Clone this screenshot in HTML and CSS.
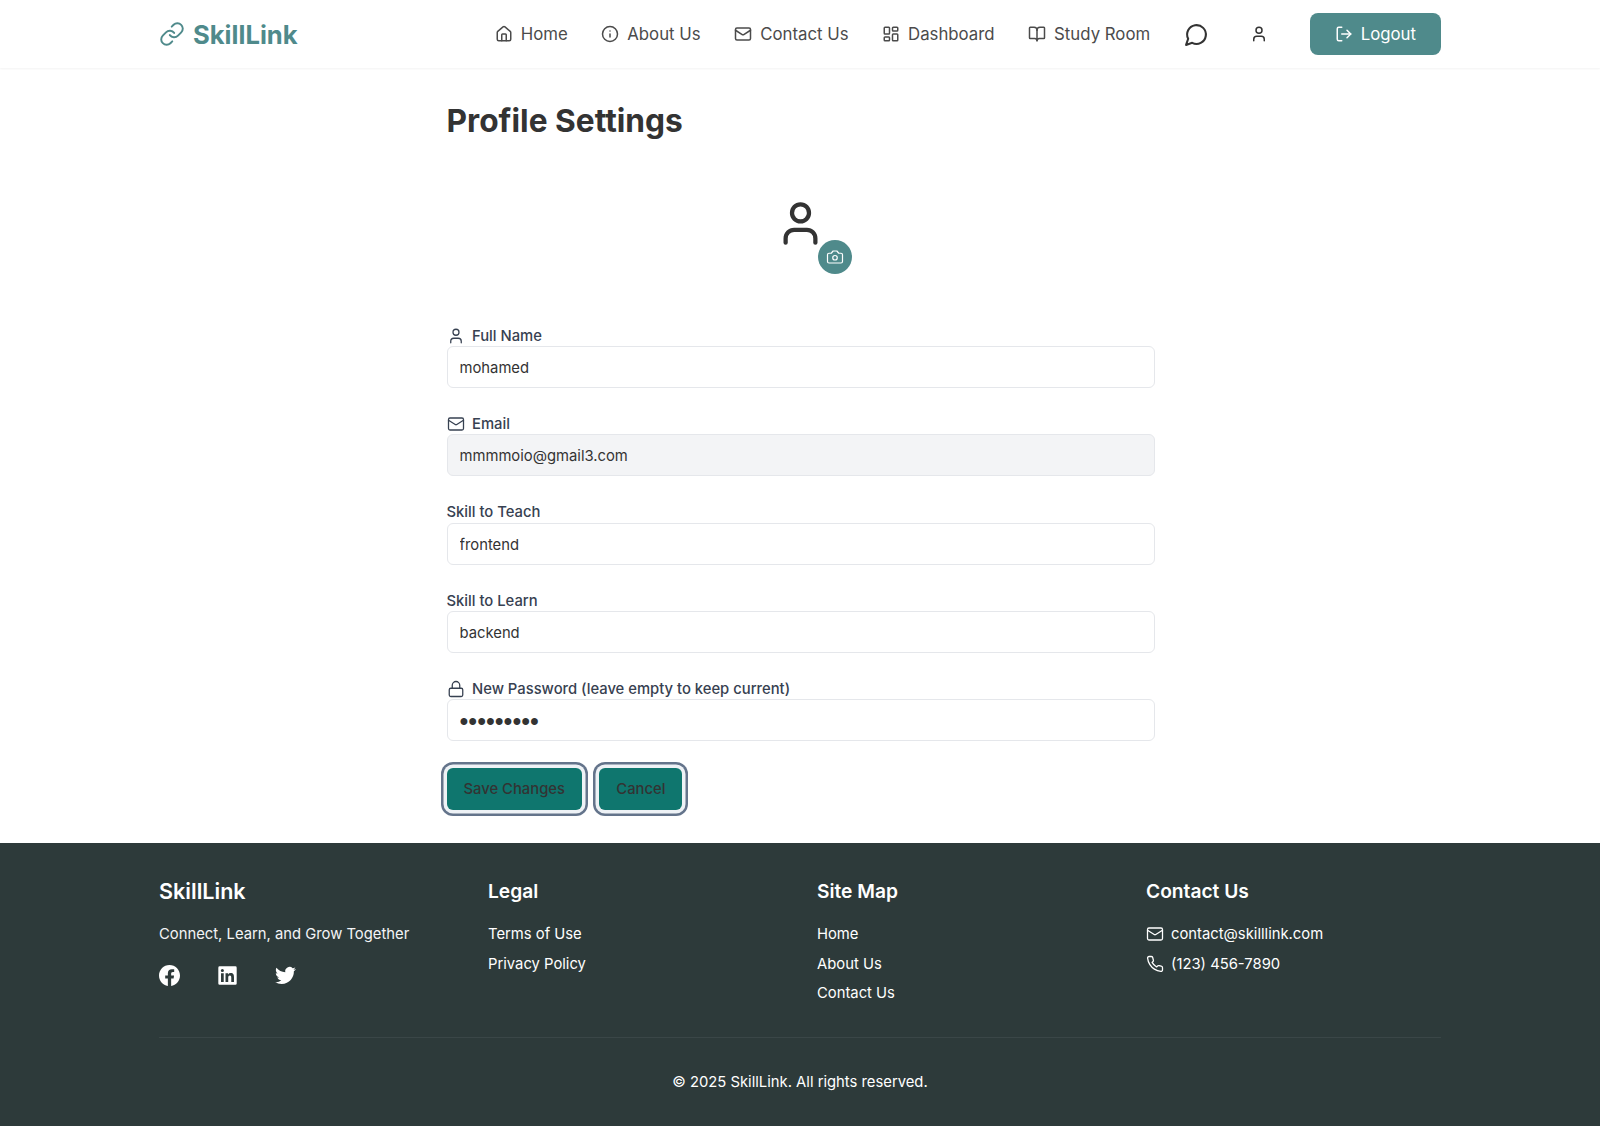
FILE: index.html
```html
<!DOCTYPE html>
<html lang="en">
<head>
<meta charset="utf-8">
<title>SkillLink - Profile Settings</title>
<link rel="stylesheet" href="styles.css">
</head>
<body>
<header class="site-header">
  <div class="header-inner">
    <a class="logo" href="#">
      <svg class="logo-icon" viewBox="0 0 24 24"><path d="M10 13a5 5 0 0 0 7.54.54l3-3a5 5 0 0 0-7.07-7.07l-1.72 1.71"/><path d="M14 11a5 5 0 0 0-7.54-.54l-3 3a5 5 0 0 0 7.07 7.07l1.71-1.71"/></svg>
      <span>SkillLink</span>
    </a>
    <nav class="nav">
      <a class="nav-link" href="#"><svg class="icon" viewBox="0 0 24 24"><path d="M15 21v-8a1 1 0 0 0-1-1h-4a1 1 0 0 0-1 1v8"/><path d="M3 10a2 2 0 0 1 .7-1.5l7-6a2 2 0 0 1 2.6 0l7 6A2 2 0 0 1 21 10v9a2 2 0 0 1-2 2H5a2 2 0 0 1-2-2z"/></svg>Home</a>
      <a class="nav-link" href="#"><svg class="icon" viewBox="0 0 24 24"><circle cx="12" cy="12" r="10"/><path d="M12 16v-4"/><path d="M12 8h.01"/></svg>About Us</a>
      <a class="nav-link" href="#"><svg class="icon" viewBox="0 0 24 24"><rect x="2" y="4" width="20" height="16" rx="2"/><path d="m22 7-8.97 5.7a1.94 1.94 0 0 1-2.06 0L2 7"/></svg>Contact Us</a>
      <a class="nav-link" href="#"><svg class="icon" viewBox="0 0 24 24"><rect x="3" y="3" width="7" height="9" rx="1"/><rect x="14" y="3" width="7" height="5" rx="1"/><rect x="14" y="12" width="7" height="9" rx="1"/><rect x="3" y="16" width="7" height="5" rx="1"/></svg>Dashboard</a>
      <a class="nav-link" href="#"><svg class="icon" viewBox="0 0 24 24"><path d="M12 7v14"/><path d="M3 18a1 1 0 0 1-1-1V4a1 1 0 0 1 1-1h5a4 4 0 0 1 4 4 4 4 0 0 1 4-4h5a1 1 0 0 1 1 1v13a1 1 0 0 1-1 1h-6a3 3 0 0 0-3 3 3 3 0 0 0-3-3z"/></svg>Study Room</a>
      <a class="nav-chat" href="#"><svg class="icon-chat" viewBox="0 0 24 24"><path d="M7.9 20A9 9 0 1 0 4 16.1L2 22Z"/></svg></a>
      <a class="nav-user" href="#"><svg class="icon" viewBox="0 0 24 24"><path d="M19 21v-2a4 4 0 0 0-4-4H9a4 4 0 0 0-4 4v2"/><circle cx="12" cy="7" r="4"/></svg></a>
      <a class="logout" href="#"><svg class="icon" viewBox="0 0 24 24"><path d="M9 21H5a2 2 0 0 1-2-2V5a2 2 0 0 1 2-2h4"/><path d="m16 17 5-5-5-5"/><path d="M21 12H9"/></svg>Logout</a>
    </nav>
  </div>
</header>

<main class="main">
  <h1 class="title">Profile Settings</h1>
  <div class="avatar-row">
    <div class="avatar">
      <svg class="avatar-icon" viewBox="0 0 24 24"><path d="M19 21v-2a4 4 0 0 0-4-4H9a4 4 0 0 0-4 4v2"/><circle cx="12" cy="7" r="4"/></svg>
      <span class="camera"><svg class="icon-camera" viewBox="0 0 24 24"><path d="M14.5 4h-5L7 7H4a2 2 0 0 0-2 2v9a2 2 0 0 0 2 2h16a2 2 0 0 0 2-2V9a2 2 0 0 0-2-2h-3z"/><circle cx="12" cy="13" r="3"/></svg></span>
    </div>
  </div>
  <form class="form">
    <div class="field">
      <label class="label"><svg class="icon-label" viewBox="0 0 24 24"><path d="M19 21v-2a4 4 0 0 0-4-4H9a4 4 0 0 0-4 4v2"/><circle cx="12" cy="7" r="4"/></svg>Full Name</label>
      <input class="input" type="text" value="mohamed">
    </div>
    <div class="field">
      <label class="label"><svg class="icon-label" viewBox="0 0 24 24"><rect x="2" y="4" width="20" height="16" rx="2"/><path d="m22 7-8.97 5.7a1.94 1.94 0 0 1-2.06 0L2 7"/></svg>Email</label>
      <input class="input input-disabled" type="email" value="mmmmoio@gmail3.com" disabled>
    </div>
    <div class="field">
      <label class="label">Skill to Teach</label>
      <input class="input" type="text" value="frontend">
    </div>
    <div class="field">
      <label class="label">Skill to Learn</label>
      <input class="input" type="text" value="backend">
    </div>
    <div class="field">
      <label class="label"><svg class="icon-label" viewBox="0 0 24 24"><rect x="3" y="11" width="18" height="11" rx="2"/><path d="M7 11V7a5 5 0 0 1 10 0v4"/></svg>New Password (leave empty to keep current)</label>
      <input class="input input-password" type="password" value="mohamed12">
    </div>
    <div class="actions">
      <button class="btn" type="button">Save Changes</button>
      <button class="btn" type="button">Cancel</button>
    </div>
  </form>
</main>

<footer class="footer">
  <div class="footer-inner">
    <div class="footer-grid">
      <div class="col">
        <h3 class="col-title col-brand">SkillLink</h3>
        <p class="col-text">Connect, Learn, and Grow Together</p>
        <div class="socials">
          <svg class="social" viewBox="0 0 24 24"><path d="M24 12.07C24 5.4 18.63 0 12 0S0 5.4 0 12.07c0 6.03 4.39 11.02 10.13 11.93v-8.44H7.08v-3.49h3.05V9.41c0-3.02 1.79-4.69 4.53-4.69 1.31 0 2.69.24 2.69.24v2.97h-1.51c-1.49 0-1.96.93-1.96 1.89v2.25h3.33l-.53 3.49h-2.8V24C19.61 23.09 24 18.1 24 12.07z"/></svg>
          <svg class="social" viewBox="0 0 24 24"><path d="M21 1.5H3A1.5 1.5 0 0 0 1.5 3v18A1.5 1.5 0 0 0 3 22.5h18a1.5 1.5 0 0 0 1.5-1.5V3A1.5 1.5 0 0 0 21 1.5zM7.7 19.4H4.6V9.4h3.1zM6.15 8.05a1.8 1.8 0 1 1 0-3.6 1.8 1.8 0 0 1 0 3.6zM19.4 19.4h-3.1v-4.85c0-1.16-.02-2.65-1.61-2.65-1.62 0-1.86 1.26-1.86 2.56v4.94h-3.1V9.4h2.97v1.37h.04a3.26 3.26 0 0 1 2.94-1.61c3.14 0 3.72 2.07 3.72 4.76z" fill-rule="evenodd"/></svg>
          <svg class="social" viewBox="0 0 24 24"><path d="M23.95 4.57a10 10 0 0 1-2.82.77 4.96 4.96 0 0 0 2.16-2.72c-.95.55-2 .96-3.13 1.19a4.92 4.92 0 0 0-8.38 4.48C7.69 8.1 4.07 6.13 1.64 3.16a4.82 4.82 0 0 0-.67 2.48c0 1.71.87 3.21 2.19 4.1a4.9 4.9 0 0 1-2.23-.62v.06a4.92 4.92 0 0 0 3.95 4.83 4.99 4.99 0 0 1-2.21.08 4.94 4.94 0 0 0 4.6 3.42A9.87 9.87 0 0 1 0 19.54a13.99 13.99 0 0 0 7.56 2.21c9.05 0 14-7.5 14-13.98 0-.21 0-.42-.02-.63a9.94 9.94 0 0 0 2.46-2.55z"/></svg>
        </div>
      </div>
      <div class="col">
        <h3 class="col-title">Legal</h3>
        <ul class="links">
          <li><a href="#">Terms of Use</a></li>
          <li><a href="#">Privacy Policy</a></li>
        </ul>
      </div>
      <div class="col">
        <h3 class="col-title">Site Map</h3>
        <ul class="links">
          <li><a href="#">Home</a></li>
          <li><a href="#">About Us</a></li>
          <li><a href="#">Contact Us</a></li>
        </ul>
      </div>
      <div class="col">
        <h3 class="col-title">Contact Us</h3>
        <ul class="links">
          <li class="contact"><svg class="icon-label" viewBox="0 0 24 24"><rect x="2" y="4" width="20" height="16" rx="2"/><path d="m22 7-8.97 5.7a1.94 1.94 0 0 1-2.06 0L2 7"/></svg>contact@skilllink.com</li>
          <li class="contact"><svg class="icon-label" viewBox="0 0 24 24"><path d="M22 16.92v3a2 2 0 0 1-2.18 2 19.79 19.79 0 0 1-8.63-3.07 19.5 19.5 0 0 1-6-6 19.79 19.79 0 0 1-3.07-8.67A2 2 0 0 1 4.11 2h3a2 2 0 0 1 2 1.72 12.84 12.84 0 0 0 .7 2.81 2 2 0 0 1-.45 2.11L8.09 9.91a16 16 0 0 0 6 6l1.27-1.27a2 2 0 0 1 2.11-.45 12.84 12.84 0 0 0 2.81.7A2 2 0 0 1 22 16.92z"/></svg>(123) 456-7890</li>
        </ul>
      </div>
    </div>
    <div class="copyright">© 2025 SkillLink. All rights reserved.</div>
  </div>
</footer>
</body>
</html>
```
FILE: styles.css
```css
* { box-sizing: border-box; }
html, body { margin: 0; padding: 0; }
body { font-family: Inter, "Liberation Sans", sans-serif; color: #333; background: #fff; }
a { color: inherit; text-decoration: none; }
svg { fill: none; stroke: currentColor; stroke-width: 2; stroke-linecap: round; stroke-linejoin: round; flex: none; }

.site-header { height: 68px; background: #fff; box-shadow: 0 1px 2px rgba(0,0,0,.05); position: relative; }
.header-inner { width: 1282px; height: 68px; margin: 0 auto; display: flex; align-items: center; justify-content: space-between; }
.logo { display: flex; align-items: center; gap: 8px; color: #4f8a8b; font-size: 25.6px; font-weight: 700; }
.logo-icon { width: 26px; height: 26px; stroke-width: 1.8; }
.nav { display: flex; align-items: center; gap: 33.5px; font-size: 16.8px; color: #4b4b4b; }
.nav-link { display: flex; align-items: center; gap: 8px; }
.icon { width: 18px; height: 18px; }
.icon-chat { width: 25px; height: 25px; color: #333; display: block; }
.nav-user { color: #333; padding: 0 8px; display: flex; }
.nav-chat { display: flex; }
.logout { display: flex; align-items: center; gap: 8px; height: 42px; padding: 0 25px; background: #4f8a8b; color: #fff; border-radius: 8px; }

.main { width: 709px; margin: 0 auto; height: 775px; padding: 34px 0 0 1px; }
.title { margin: 0; font-size: 31.7px; line-height: 38px; font-weight: 700; color: #333; }
.avatar-row { display: flex; justify-content: center; margin-top: 58px; }
.avatar { width: 51px; height: 51px; position: relative; color: #333; }
.avatar-icon { width: 51px; height: 51px; display: block; }
.camera { position: absolute; left: 43px; top: 42px; width: 34px; height: 34px; border-radius: 50%; background: #4f8a8b; color: #fff; display: flex; align-items: center; justify-content: center; }
.icon-camera { width: 18px; height: 18px; stroke-width: 1.6; }

.form { margin-top: 74.5px; display: flex; flex-direction: column; gap: 24px; }
.field { display: flex; flex-direction: column; }
.label { display: flex; align-items: center; gap: 7.5px; font-size: 14.8px; line-height: 20.4px; font-weight: 500; color: #374151; height: 22.4px; padding-top: 2px; }
.icon-label { width: 18px; height: 18px; stroke-width: 1.7; }
.input { height: 42px; width: 100%; padding: 2px 12px 0; border: 1px solid #e5e7eb; border-radius: 6px; font: inherit; font-size: 14.8px; color: #333; background: #fff; outline: none; }
.input-disabled { background: #f3f4f6; color: #333; -webkit-text-fill-color: #333; opacity: 1; }
.input-password { font-family: "Liberation Sans", sans-serif; font-size: 25.2px; padding-top: 3px; }
.actions { display: flex; gap: 17.3px; margin-top: 3px; }
.btn { height: 42px; padding: 0 17px; border: 0; border-radius: 6px; background: #0f766e; color: #333; font: inherit; font-size: 14.8px; font-weight: 500; box-shadow: 0 0 0 3.5px #eef2f6, 0 0 0 6px #64748b; }

.footer { background: #2d3a3a; color: #fff; height: 283px; padding-top: 34px; }
.footer-inner { width: 1282px; margin: 0 auto; }
.footer-grid { display: grid; grid-template-columns: repeat(4, 1fr); column-gap: 34px; padding-bottom: 32px; border-bottom: 1px solid #3a4647; height: 161px; }
.col-title { margin: 0 0 17px; font-size: 19.2px; line-height: 28px; font-weight: 600; }
.col-brand { font-size: 21.6px; }
.col-text { margin: 0 0 19px; line-height: 24px; color: #f3f4f6; font-size: 14.8px; }
.socials { display: flex; gap: 37px; }
.social { width: 21px; height: 21px; fill: #fff; stroke: none; }
.links { list-style: none; margin: 0; padding: 0; display: flex; flex-direction: column; gap: 5.5px; font-size: 14.8px; line-height: 24px; }
.contact { display: flex; align-items: center; gap: 7px; }
.copyright { text-align: center; margin-top: 32px; font-size: 14.8px; line-height: 24px; }
```
